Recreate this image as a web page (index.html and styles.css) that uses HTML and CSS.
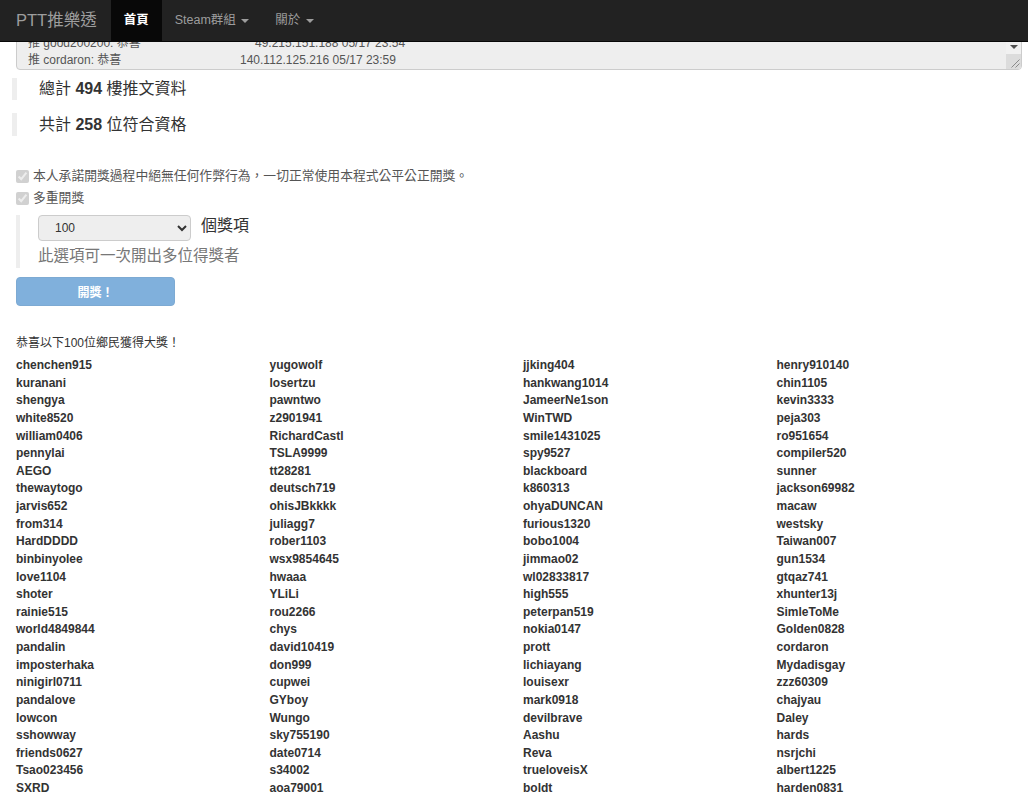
FILE: index.html
```html
<!DOCTYPE html>
<html lang="zh-Hant">
<head>
<meta charset="utf-8">
<title>PTT推樂透</title>
<link rel="stylesheet" href="styles.css">
</head>
<body>
<nav class="navbar">
  <a class="brand">PTT推樂透</a>
  <ul class="nav">
    <li class="active"><a>首頁</a></li>
    <li><a>Steam群組 <span class="caret"></span></a></li>
    <li><a>關於 <span class="caret"></span></a></li>
  </ul>
</nav>
<main class="page">
  <div class="log">
    <div class="log-lines">
      <div class="log-line"><span class="who">推 good200200: 恭喜</span><span class="ip ip-a">49.215.151.188 05/17 23:54</span></div>
      <div class="log-line"><span class="who">推 cordaron: 恭喜</span><span class="ip">140.112.125.216 05/17 23:59</span></div>
    </div>
    <div class="log-scroll">
      <span class="scroll-down"><span class="tri"></span></span>
      <span class="grip"><svg width="15" height="15" viewBox="0 0 15 15"><path d="M13.5 5.5 L5.5 13.5 M13.5 9.5 L9.5 13.5" stroke="#8a8a8a" stroke-width="1" fill="none"/></svg></span>
    </div>
  </div>

  <blockquote class="stat">總計 <b>494</b> 樓推文資料</blockquote>
  <blockquote class="stat stat-2">共計 <b>258</b> 位符合資格</blockquote>

  <label class="check check-1"><input type="checkbox" checked disabled>本人承諾開獎過程中絕無任何作弊行為，一切正常使用本程式公平公正開獎。</label>
  <label class="check check-2"><input type="checkbox" checked disabled>多重開獎</label>

  <div class="multi">
    <div class="multi-row">
      <select class="count"><option>100</option></select>
      <span class="unit">個獎項</span>
    </div>
    <p class="hint">此選項可一次開出多位得獎者</p>
  </div>

  <button class="draw" disabled>開獎！</button>

  <p class="congrats">恭喜以下100位鄉民獲得大獎！</p>

  <ul class="winners">
    <li>chenchen915</li><li>yugowolf</li><li>jjking404</li><li>henry910140</li>
    <li>kuranani</li><li>losertzu</li><li>hankwang1014</li><li>chin1105</li>
    <li>shengya</li><li>pawntwo</li><li>JameerNe1son</li><li>kevin3333</li>
    <li>white8520</li><li>z2901941</li><li>WinTWD</li><li>peja303</li>
    <li>william0406</li><li>RichardCastl</li><li>smile1431025</li><li>ro951654</li>
    <li>pennylai</li><li>TSLA9999</li><li>spy9527</li><li>compiler520</li>
    <li>AEGO</li><li>tt28281</li><li>blackboard</li><li>sunner</li>
    <li>thewaytogo</li><li>deutsch719</li><li>k860313</li><li>jackson69982</li>
    <li>jarvis652</li><li>ohisJBkkkk</li><li>ohyaDUNCAN</li><li>macaw</li>
    <li>from314</li><li>juliagg7</li><li>furious1320</li><li>westsky</li>
    <li>HardDDDD</li><li>rober1103</li><li>bobo1004</li><li>Taiwan007</li>
    <li>binbinyolee</li><li>wsx9854645</li><li>jimmao02</li><li>gun1534</li>
    <li>love1104</li><li>hwaaa</li><li>wl02833817</li><li>gtqaz741</li>
    <li>shoter</li><li>YLiLi</li><li>high555</li><li>xhunter13j</li>
    <li>rainie515</li><li>rou2266</li><li>peterpan519</li><li>SimleToMe</li>
    <li>world4849844</li><li>chys</li><li>nokia0147</li><li>Golden0828</li>
    <li>pandalin</li><li>david10419</li><li>prott</li><li>cordaron</li>
    <li>imposterhaka</li><li>don999</li><li>lichiayang</li><li>Mydadisgay</li>
    <li>ninigirl0711</li><li>cupwei</li><li>louisexr</li><li>zzz60309</li>
    <li>pandalove</li><li>GYboy</li><li>mark0918</li><li>chajyau</li>
    <li>lowcon</li><li>Wungo</li><li>devilbrave</li><li>Daley</li>
    <li>sshowway</li><li>sky755190</li><li>Aashu</li><li>hards</li>
    <li>friends0627</li><li>date0714</li><li>Reva</li><li>nsrjchi</li>
    <li>Tsao023456</li><li>s34002</li><li>trueloveisX</li><li>albert1225</li>
    <li>SXRD</li><li>aoa79001</li><li>boldt</li><li>harden0831</li>
  </ul>
</main>
</body>
</html>
```

FILE: styles.css
```css
html, body {
  margin: 0;
  padding: 0;
  background: #fff;
}

body {
  font-family: "Liberation Sans", "Noto Sans CJK TC", sans-serif;
  color: #333;
}

/* ---------- navbar ---------- */
.navbar {
  position: fixed;
  top: 0;
  left: 0;
  right: 0;
  height: 41px;
  background: #222;
  border-bottom: 1px solid #080808;
  display: flex;
  align-items: stretch;
  z-index: 10;
}

.brand {
  padding: 0 14px 0 16px;
  font-size: 16.5px;
  line-height: 41px;
  color: #9d9d9d;
}

.nav {
  display: flex;
  margin: 0;
  padding: 0;
  list-style: none;
}

.nav a {
  display: block;
  padding: 0 13px;
  line-height: 41px;
  font-size: 12.5px;
  color: #9d9d9d;
  text-decoration: none;
}

.nav .active a {
  background: #080808;
  color: #fff;
  font-weight: bold;
}

.caret {
  display: inline-block;
  width: 0;
  height: 0;
  margin-left: 2px;
  vertical-align: middle;
  border-top: 4px solid #9d9d9d;
  border-left: 4px solid transparent;
  border-right: 4px solid transparent;
}

/* ---------- page ---------- */
.page {
  padding: 10px 6px 0 16px;
}

.log {
  display: flex;
  height: 60px;
  box-sizing: border-box;
  border: 1px solid #ccc;
  border-radius: 4px;
  background: #eee;
  overflow: hidden;
}

.log-lines {
  flex: 1;
  display: flex;
  flex-direction: column;
  justify-content: flex-end;
  padding-left: 11px;
  font-size: 12px;
  line-height: 17px;
  color: #555;
}

.log-line {
  white-space: nowrap;
}

.who {
  display: inline-block;
  width: 212px;
}

.ip-a {
  margin-left: 15px;
}

.log-scroll {
  width: 15px;
  display: flex;
  flex-direction: column;
  justify-content: flex-end;
  background: #f1f1f1;
}

.scroll-down {
  height: 15px;
  display: flex;
  align-items: center;
  justify-content: center;
}

.tri {
  width: 0;
  height: 0;
  border-top: 4px solid #505050;
  border-left: 4px solid transparent;
  border-right: 4px solid transparent;
}

.grip {
  height: 15px;
  display: block;
  background: #dcdcdc;
}

.grip svg {
  display: block;
}

.stat {
  margin: 8px 0 0 -4px;
  padding: 0 0 0 22px;
  border-left: 5px solid #eee;
  font-size: 16px;
  line-height: 22px;
  color: #333;
}

.stat-2 {
  margin-top: 13px;
  line-height: 23px;
}

.check {
  display: flex;
  align-items: center;
  font-size: 12.8px;
  line-height: 20px;
  color: #555;
}

.check input {
  width: 13px;
  height: 13px;
  margin: 0 4px 0 0;
}

.check-1 {
  margin-top: 30px;
}

.check-2 {
  margin-top: 2px;
}

.multi {
  margin-top: 7px;
  border-left: 4px solid #eee;
  padding-left: 18px;
}

.multi-row {
  display: flex;
  align-items: flex-start;
  gap: 10px;
}

.count {
  width: 153px;
  height: 26px;
  box-sizing: border-box;
  padding: 0 6px 0 12px;
  border: 1px solid #ccc;
  border-radius: 4px;
  background-color: #eee;
  font-family: "Liberation Sans", sans-serif;
  font-size: 12px;
  color: #333;
}

.unit {
  font-size: 16px;
  line-height: 22px;
  color: #333;
}

.hint {
  margin: 0;
  padding-top: 2px;
  font-size: 15.5px;
  line-height: 25px;
  color: #777;
}

.draw {
  display: block;
  margin-top: 9px;
  width: 159px;
  height: 29px;
  border: 1px solid #7daad3;
  border-radius: 4px;
  background: #80b0dc;
  color: #fff;
  font-family: "Liberation Sans", "Noto Sans CJK TC", sans-serif;
  font-size: 12px;
  font-weight: bold;
}

.congrats {
  margin: 29px 0 0;
  font-size: 12px;
  line-height: 16px;
  color: #333;
}

.winners {
  list-style: none;
  margin: 6px 0 0;
  padding: 0;
  display: grid;
  grid-template-columns: repeat(3, 253.5px) 1fr;
  font-size: 12px;
  font-weight: bold;
  line-height: 17.63px;
  color: #333;
}
```
